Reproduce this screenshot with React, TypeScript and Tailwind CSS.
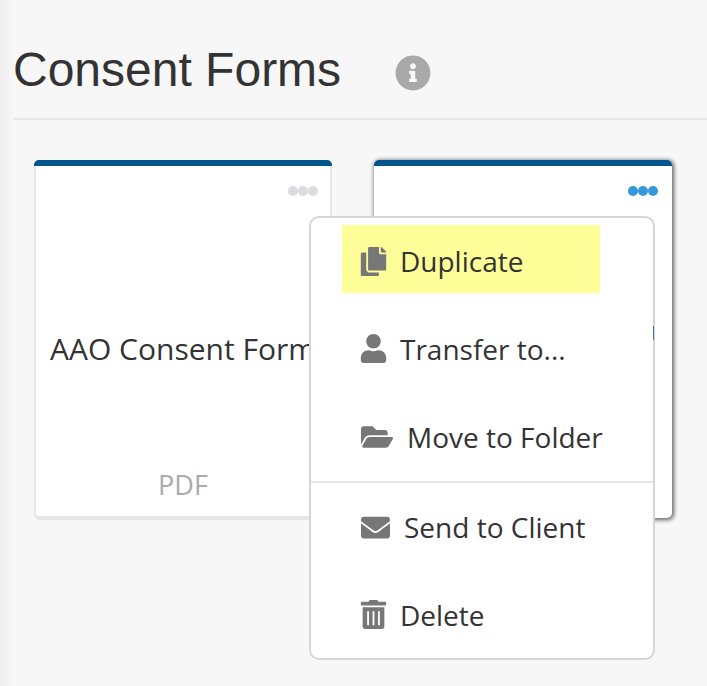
import { FaCopy, FaUser, FaFolderOpen, FaEnvelope, FaTrashAlt, FaInfoCircle } from "react-icons/fa";

const label = "text-[28px] leading-[38px] text-[#333333] font-['Open_Sans',sans-serif]";

function Dots({ active }: { active?: boolean }) {
  return (
    <div className={"flex justify-end pt-[20px] " + (active ? "pr-[14px]" : "pr-[12px]")}>
      {[0, 1, 2].map((i) => (
        <span key={i} className={"h-[10px] w-[10px] rounded-full " + (active ? "bg-[#3498db]" : "bg-[#dcdcdf]")} />
      ))}
    </div>
  );
}

export default function App() {
  return (
    <div className="relative h-[686px] w-[707px] overflow-hidden bg-gradient-to-r from-[#eeeeee] to-[#f7f7f7] to-[14px]">
      <div className="flex items-center pt-[40px] pb-[18px] pl-[13px]">
        <h1 className="font-['Liberation_Sans',sans-serif] text-[48px] leading-[60px] font-normal text-[#333333]">Consent Forms</h1>
        <FaInfoCircle className="mt-[6px] ml-[54px] text-[36px] text-[#a9a9a9]" />
      </div>
      <div className="ml-[13px] h-[2px] bg-[#e6e6e6]" />
      <div className="flex items-start gap-[42px] pt-[40px] pl-[34px]">
        <div className="flex h-[360px] w-[298px] flex-col rounded-[5px] bg-white">
          <div className="h-[6px] rounded-t-[5px] bg-[#00558c]" />
          <div className="flex flex-1 flex-col rounded-b-[5px] border-x-2 border-b-4 border-x-[#e8e8e8] border-b-[#e6e6e6]">
            <Dots />
            <div className="mt-[134px] pl-[14px] font-['Open_Sans',sans-serif] text-[30px] leading-[38px] whitespace-nowrap text-[#333333]">AAO Consent Form</div>
            <div className="mt-auto mb-[13px] text-center font-['Open_Sans',sans-serif] text-[27px] leading-[37px] text-[#aaaaaa]">PDF</div>
          </div>
        </div>
        <div className="h-[358px] w-[298px] rounded-[5px] bg-white shadow-[1px_1px_4px_1px_rgba(0,0,0,0.6)]">
          <div className="h-[6px] rounded-t-[5px] bg-[#00558c]" />
          <Dots active />
        </div>
      </div>
      <div className="absolute top-[216px] left-[309px] flex h-[444px] w-[346px] flex-col rounded-[10px] border-2 border-[#d6d6d6] bg-white pt-[7px]">
        <span className="absolute top-[108px] right-[-1px] h-[14px] w-[1px] bg-[#3a72ad]" />
        <div className="ml-[31px] flex h-[68px] w-[258px] items-center bg-[#ffff99] pt-[4px] pl-[17px]">
          <FaCopy className="text-[29px] text-[#777777]" />
          <span className={"ml-[12px] " + label}>Duplicate</span>
        </div>
        <div className="mt-[11px] flex h-[89px] items-center pl-[48px]">
          <FaUser className="text-[29px] text-[#777777]" />
          <span className={"ml-[12px] " + label}>Transfer to...</span>
        </div>
        <div className="flex h-[90px] items-center border-b-2 border-[#e6e6e6] pl-[50px]">
          <FaFolderOpen className="text-[32px] text-[#777777]" />
          <span className={"ml-[14px] " + label}>Move to Folder</span>
        </div>
        <div className="flex h-[88px] items-center pl-[50px]">
          <FaEnvelope className="text-[29px] text-[#777777]" />
          <span className={"ml-[14px] " + label}>Send to Client</span>
        </div>
        <div className="flex h-[87px] items-center pl-[48px]">
          <FaTrashAlt className="text-[29px] text-[#777777]" />
          <span className={"ml-[12px] " + label}>Delete</span>
        </div>
      </div>
    </div>
  );
}
